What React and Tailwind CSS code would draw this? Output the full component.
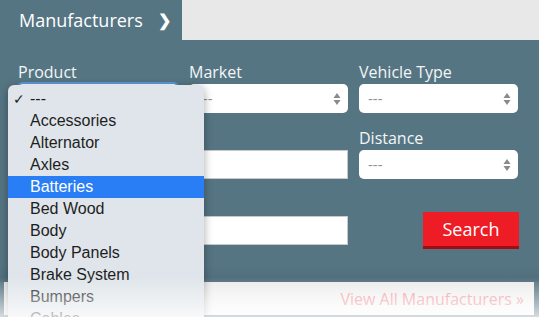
import { useState } from 'react';

const products = [
  '---',
  'Accessories',
  'Alternator',
  'Axles',
  'Batteries',
  'Bed Wood',
  'Body',
  'Body Panels',
  'Brake System',
  'Bumpers',
  'Cables',
];

const Arrows = () => (
  <svg width="8" height="13" viewBox="0 0 8 13" className="absolute right-[7px] top-1/2 -translate-y-1/2">
    <path d="M4 0.5 L7.5 5.5 H0.5 Z" fill="#8a8a8a" />
    <path d="M4 12.5 L7.5 7.5 H0.5 Z" fill="#8a8a8a" />
  </svg>
);

const FakeSelect = ({ focused }) => (
  <div
    className={`relative h-[29px] rounded-[5px] bg-white pl-[9px] flex items-center text-[15px] text-[#8f8f8f] ${
      focused ? 'ring-2 ring-[#5b9bd9]' : ''
    }`}
  >
    ---
    <Arrows />
  </div>
);

const Field = ({ label, children, className = '' }) => (
  <div className={`flex flex-col ${className}`}>
    <label className="h-[24px] leading-[24px] text-[16px] text-[#f3f5f6]">{label}</label>
    {children}
  </div>
);

const TextInput = () => (
  <div className="h-[29px] bg-white border border-[#c9c9c9]" />
);

export default function App() {
  const [selected] = useState('Batteries');

  return (
    <div
      className="relative w-[539px] h-[317px] overflow-hidden bg-[#567583]"
      style={{ fontFamily: '"Open Sans", sans-serif' }}
    >
      {/* tab bar */}
      <div className="flex h-[40px]">
        <div className="w-[182px] flex items-center pl-[19px] text-[18px] text-white">
          Manufacturers
          <span className="ml-[15px] text-[16px] font-bold">❯</span>
        </div>
        <div className="flex-1 bg-[#e8e8e8]" />
      </div>

      {/* search form */}
      <div className="grid grid-cols-[160px_159px_159px] gap-x-[11px] gap-y-[13px] pl-[18px] pt-[20px]">
        <Field label="Product">
          <FakeSelect focused />
        </Field>
        <Field label="Market">
          <FakeSelect />
        </Field>
        <Field label="Vehicle Type">
          <FakeSelect />
        </Field>

        <Field label="" className="col-span-2">
          <TextInput />
        </Field>
        <Field label="Distance">
          <FakeSelect />
        </Field>

        <Field label="" className="col-span-2">
          <TextInput />
        </Field>
        <div className="flex items-end justify-end">
          <button className="-mb-[4px] mr-[-1px] w-[96px] h-[37px] bg-[#ee1c25] border-b-[3px] border-[#a10d12] text-white text-[18px] leading-none">
            Search
          </button>
        </div>
      </div>

      {/* bottom strip */}
      <div className="absolute left-[4px] right-[5px] top-[282px] h-[33px] bg-gradient-to-b from-[#ebebeb] to-[#fafafa] flex items-center justify-end pr-[10px]">
        <span className="text-[16px] text-[#f29aa0]">View All Manufacturers »</span>
      </div>

      {/* panel shade above strip */}
      <div className="absolute left-0 right-0 top-[266px] h-[16px] bg-gradient-to-b from-transparent to-[#4a6672]/60" />

      {/* opened native select menu */}
      <div
        className="absolute left-[8px] top-[85px] w-[196px] h-[250px] rounded-[6px] bg-[#dfe5ea] shadow-[0_2px_10px_rgba(0,0,0,0.35)] pt-[3px]"
        style={{ fontFamily: '"Liberation Sans", Arial, sans-serif' }}
      >
        {products.map((p) => (
          <div
            key={p}
            className={`relative h-[22px] leading-[22px] pl-[22px] text-[16px] ${
              p === selected ? 'bg-[#2a7ef5] text-white' : 'text-[#1e1e1e]'
            }`}
          >
            {p === '---' && (
              <span className="absolute left-[5px] top-0 text-[14px]">✓</span>
            )}
            {p}
          </div>
        ))}
      </div>

      {/* bottom fade */}
      <div className="absolute left-0 right-0 bottom-0 h-[40px] bg-gradient-to-b from-white/0 to-white/75 pointer-events-none" />
    </div>
  );
}
